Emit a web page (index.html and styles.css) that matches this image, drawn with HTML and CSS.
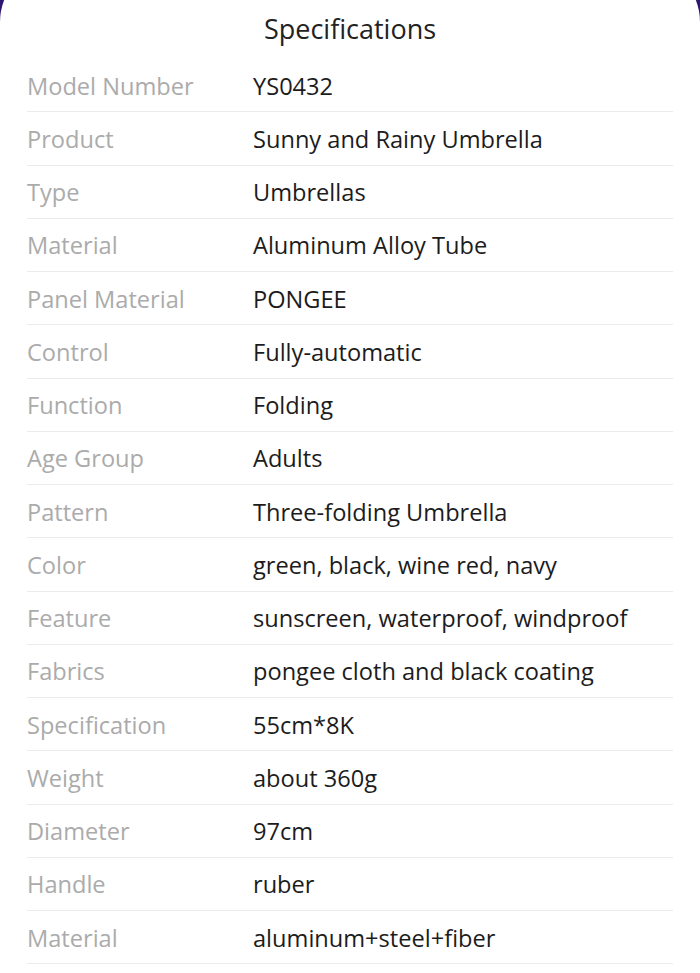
FILE: index.html
```html
<!DOCTYPE html>
<html>
<head>
<meta charset="utf-8">
<link rel="stylesheet" href="styles.css">
</head>
<body>
<div class="card">
  <h1 class="title">Specifications</h1>
  <div class="specs">
    <div class="row"><span class="label">Model Number</span><span class="value">YS0432</span></div>
    <div class="row"><span class="label">Product</span><span class="value">Sunny and Rainy Umbrella</span></div>
    <div class="row"><span class="label">Type</span><span class="value">Umbrellas</span></div>
    <div class="row"><span class="label">Material</span><span class="value">Aluminum Alloy Tube</span></div>
    <div class="row"><span class="label">Panel Material</span><span class="value">PONGEE</span></div>
    <div class="row"><span class="label">Control</span><span class="value">Fully-automatic</span></div>
    <div class="row"><span class="label">Function</span><span class="value">Folding</span></div>
    <div class="row"><span class="label">Age Group</span><span class="value">Adults</span></div>
    <div class="row"><span class="label">Pattern</span><span class="value">Three-folding Umbrella</span></div>
    <div class="row"><span class="label">Color</span><span class="value">green, black, wine red, navy</span></div>
    <div class="row"><span class="label">Feature</span><span class="value">sunscreen, waterproof, windproof</span></div>
    <div class="row"><span class="label">Fabrics</span><span class="value">pongee cloth and black coating</span></div>
    <div class="row"><span class="label">Specification</span><span class="value">55cm*8K</span></div>
    <div class="row"><span class="label">Weight</span><span class="value">about 360g</span></div>
    <div class="row"><span class="label">Diameter</span><span class="value">97cm</span></div>
    <div class="row"><span class="label">Handle</span><span class="value">ruber</span></div>
    <div class="row"><span class="label">Material</span><span class="value">aluminum+steel+fiber</span></div>
  </div>
</div>
</body>
</html>
```

FILE: styles.css
```css
html, body {
  margin: 0;
  padding: 0;
}
body {
  background: #2f1670;
  font-family: "Open Sans", "Noto Sans", sans-serif;
  overflow: hidden;
  height: 973px;
}
.card {
  background: #fff;
  margin-top: -38px;
  padding-top: 38px;
  border-radius: 60px 60px 0 0;
  height: 973px;
}
.title {
  margin: 0;
  height: 59px;
  line-height: 57px;
  text-align: center;
  font-size: 27px;
  font-weight: 400;
  color: #222;
}
.specs {
  padding: 0 27px;
}
.row {
  display: flex;
  align-items: center;
  height: 53.25px;
  box-sizing: border-box;
  padding-top: 1px;
  border-bottom: 1.5px solid #ebebeb;
  font-size: 23.6px;
}
.label {
  width: 226px;
  flex: none;
  color: #ababab;
}
.value {
  color: #1c1c1c;
}
```
